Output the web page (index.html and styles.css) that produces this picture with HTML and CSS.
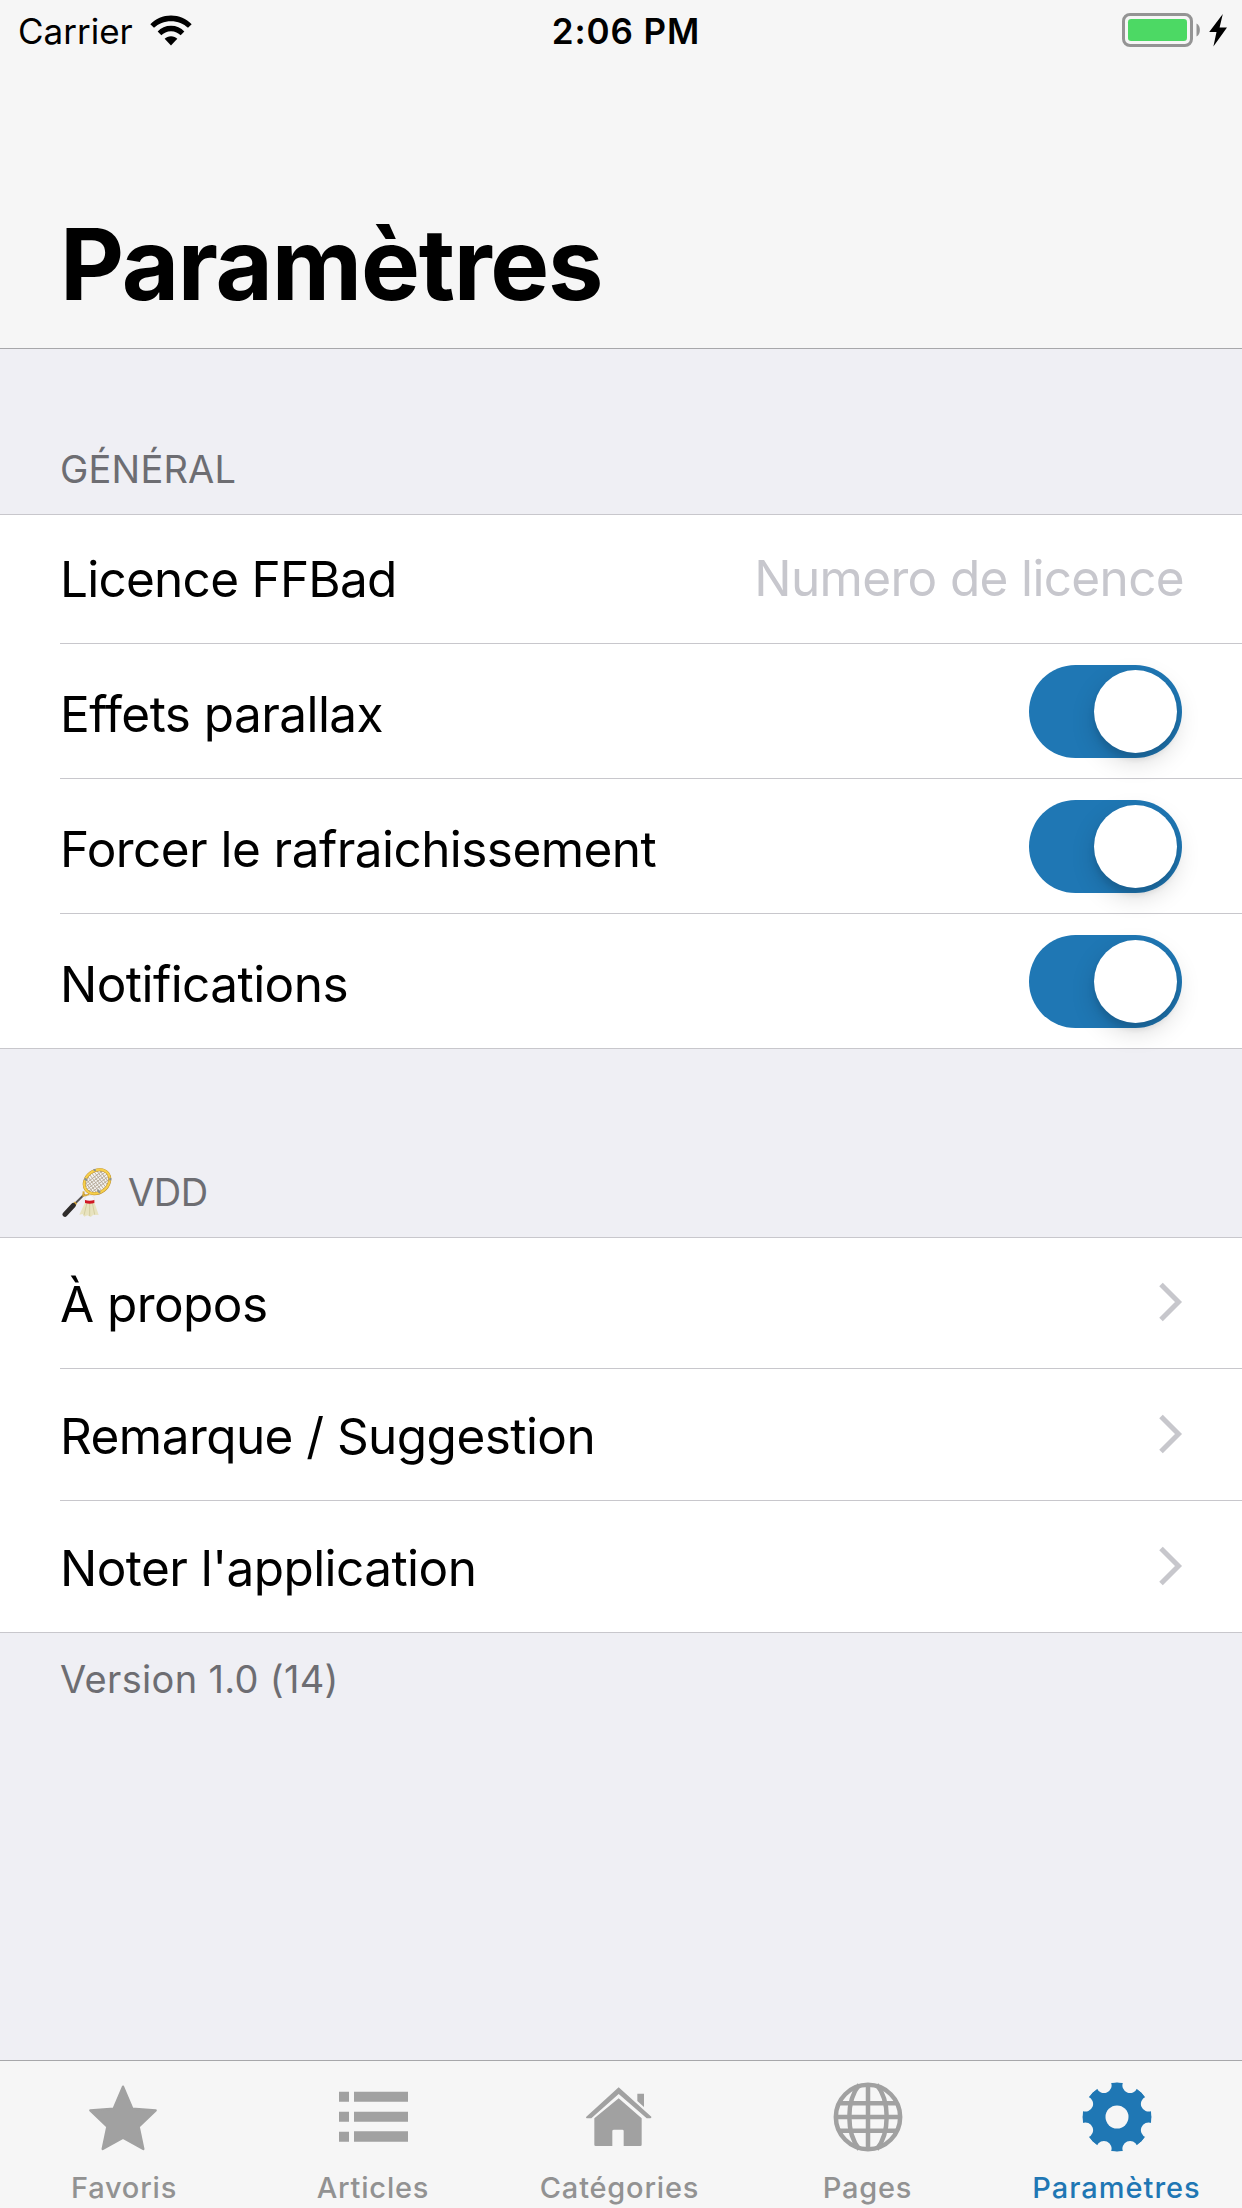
FILE: index.html
```html
<!DOCTYPE html>
<html lang="fr">
<head>
<meta charset="utf-8">
<title>Paramètres</title>
<link rel="stylesheet" href="styles.css">
</head>
<body>
<header class="navbar">
  <div class="status">
    <div class="status-left">
      <span>Carrier</span>
      <svg class="wifi" viewBox="0 0 126 92" width="42" height="31">
        <path d="M63 1C39 1 17 11 1 27L12 38C25 25 43 18 63 18S101 25 114 38L125 27C109 11 87 1 63 1Z"/>
        <path d="M63 32C47 32 33 38 23 49L34 60C41 53 51 48 63 48S85 53 92 60L103 49C93 38 79 32 63 32Z"/>
        <path d="M63 63C55 63 49 66 44 71L63 91L82 71C77 66 71 63 63 63Z"/>
      </svg>
    </div>
    <time class="status-time">2:06 PM</time>
    <div class="status-right">
      <svg width="106" height="34" viewBox="0 0 106 34">
        <rect x="1.500" y="1.500" width="68" height="31" rx="6.500" fill="none" stroke="#949494" stroke-width="3"/>
        <rect x="6" y="6" width="59" height="22" rx="3.200" fill="#4cd964"/>
        <path d="M74.500 10.500C79 12 79 22 74.500 23.500Z" fill="#949494"/>
        <path d="M100.800 1L87.200 19H94.500L91.400 33.500L105 14.500H97.600Z" fill="#000"/>
      </svg>
    </div>
  </div>
  <h1 class="title">Paramètres</h1>
</header>

<main class="content">
  <h2 class="section-title section-title-first">GÉNÉRAL</h2>
  <section class="group">
    <label class="row row-field"><span class="label">Licence FFBad</span><span class="placeholder">Numero de licence</span></label>
    <div class="row row-switch"><span class="label">Effets parallax</span><span class="switch"><span class="thumb"></span></span></div>
    <div class="row row-switch"><span class="label">Forcer le rafraichissement</span><span class="switch"><span class="thumb"></span></span></div>
    <div class="row row-switch"><span class="label">Notifications</span><span class="switch"><span class="thumb"></span></span></div>
  </section>

  <h2 class="section-title section-title-vdd">
    <svg class="racket" width="50" height="50" viewBox="0 0 150 150">
      <path d="M68 78L30 116" stroke="#555250" stroke-width="6"/>
      <path d="M42 104L34 112" stroke="#d9a83c" stroke-width="10"/>
      <path d="M34 112L9 139" stroke="#2f2c2b" stroke-width="15" stroke-linecap="round"/>
      <path d="M65 70L64 83L82 80" fill="none" stroke="#d9ab3a" stroke-width="6"/>
      <g transform="rotate(-37 105 41)">
        <ellipse cx="105" cy="41" rx="41" ry="33" fill="#f3f1ee"/>
        <path d="M76 18V64M84 13V69M92 10V72M100 8V74M108 8V74M116 9V73M124 12V70M132 17V65M68 25H142M65 33H145M64 41H146M65 49H145M68 57H142" stroke="#b3a796" stroke-width="2.500"/>
        <ellipse cx="105" cy="41" rx="41" ry="33" fill="none" stroke="#b88a2b" stroke-width="9"/>
        <ellipse cx="105" cy="41" rx="41" ry="33" fill="none" stroke="#f6cf4b" stroke-width="6.500"/>
      </g>
      <path d="M68 32L75 37M107 66L114 74M142 33L148 34M97 3L99 9" stroke="#8c918f" stroke-width="7"/>
      <path d="M71 100L52 140L62 138L67 146L76 142L86 147L94 140L110 141L96 100Z" fill="#e8e3bf"/>
      <path d="M75 104L66 142M83 104V144M91 104L98 140" stroke="#c8c18f" stroke-width="2"/>
      <path d="M69 101V94C69 78 97 78 97 94V101Z" fill="#f4f5fa" stroke="#cdcfd6" stroke-width="1"/>
      <path d="M69 96Q83 100 97 96V105Q83 109 69 105Z" fill="#d01824"/>
    </svg>
    <span>VDD</span>
  </h2>
  <section class="group">
    <a class="row row-link row-link-first"><span class="label">À propos</span><svg class="chevron" width="25" height="40" viewBox="0 0 25 40"><path d="M3 2.500L20.500 20L3 37.500"/></svg></a>
    <a class="row row-link"><span class="label">Remarque / Suggestion</span><svg class="chevron" width="25" height="40" viewBox="0 0 25 40"><path d="M3 2.500L20.500 20L3 37.500"/></svg></a>
    <a class="row row-link"><span class="label">Noter l'application</span><svg class="chevron" width="25" height="40" viewBox="0 0 25 40"><path d="M3 2.500L20.500 20L3 37.500"/></svg></a>
  </section>
  <p class="footnote">Version 1.0 (14)</p>
</main>

<nav class="tabbar">
  <a class="tab">
    <svg class="tab-icon tab-icon-star" width="70" height="70" viewBox="-105 -105 210 210"><path class="star" d="M0 -91L28 -25L98 -20L47 29L61 96L0 62L-61 96L-47 29L-98 -20L-28 -25Z"/></svg>
    <span>Favoris</span>
  </a>
  <a class="tab">
    <svg class="tab-icon" width="70" height="70" viewBox="-105 -105 210 210"><path d="M-102 -76h30v30h-30zM-57 -76h162v30h-162zM-102 -16h30v30h-30zM-57 -16h162v30h-162zM-102 44h30v30h-30zM-57 43h162v31h-162z"/></svg>
    <span>Articles</span>
  </a>
  <a class="tab">
    <svg class="tab-icon tab-icon-house" width="70" height="70" viewBox="-105 -105 210 210"><path d="M-1 -89L97 -1Q98 4 93 4H83L-1 -69L-83 4H-96Q-101 4 -98 -1ZM55 -70H75V-30L55 -48ZM-1 -56L68 4V83Q68 87 64 87H14V42Q14 38 10 38H-15Q-20 38 -20 42V87H-70Q-74 87 -74 83V4Z"/></svg>
    <span>Catégories</span>
  </a>
  <a class="tab">
    <svg class="tab-icon" width="70" height="70" viewBox="-105 -105 210 210"><g class="globe"><circle r="96.500"/><path d="M0 -98V98M-96 0H96M-88 -41H88M-88 41H88M-26 -97C-66 -49 -66 49 -26 97M26 -97C66 -49 66 49 26 97"/></g></svg>
    <span>Pages</span>
  </a>
  <a class="tab tab-active">
    <svg class="tab-icon" width="70" height="70" viewBox="-105 -105 210 210">
      <defs>
        <circle id="notch" cy="-102.500" r="23"/>
        <mask id="teeth" maskUnits="userSpaceOnUse" x="-105" y="-105" width="210" height="210">
          <circle r="104" fill="#fff"/>
          <g fill="#000">
            <circle r="34.500"/>
            <use href="#notch" transform="rotate(22.500)"/><use href="#notch" transform="rotate(67.500)"/>
            <use href="#notch" transform="rotate(112.500)"/><use href="#notch" transform="rotate(157.500)"/>
            <use href="#notch" transform="rotate(202.500)"/><use href="#notch" transform="rotate(247.500)"/>
            <use href="#notch" transform="rotate(292.500)"/><use href="#notch" transform="rotate(337.500)"/>
          </g>
        </mask>
      </defs>
      <circle r="104" mask="url(#teeth)"/>
    </svg>
    <span>Paramètres</span>
  </a>
</nav>
</body>
</html>
```
FILE: styles.css
```css
* { box-sizing: border-box; }

body {
  margin: 0;
  width: 1242px;
  height: 2208px;
  display: flex;
  flex-direction: column;
  overflow: hidden;
  background: #efeff4;
  color: #000;
  font-family: Inter, "Liberation Sans", sans-serif;
}

.navbar {
  height: 349px;
  display: flex;
  flex-direction: column;
  justify-content: space-between;
  background: #f6f6f6;
  border-bottom: 1px solid #a7a7aa;
}

.status {
  height: 62px;
  padding: 0 14px 0 18px;
  display: grid;
  grid-template-columns: 1fr auto 1fr;
  align-items: center;
  font-size: 35px;
  line-height: 62px;
}

.status-left { display: flex; align-items: center; gap: 17px; }
.wifi { margin-top: -2px; }
.status-time { padding-left: 6px; font-weight: 600; letter-spacing: 0.9px; }
.status-right { display: flex; justify-content: flex-end; margin-top: -2px; }

.title {
  margin: 0;
  padding: 0 0 24px 60px;
  font-size: 99px;
  line-height: 120px;
  font-weight: 700;
  letter-spacing: -1.25px;
}

.content { flex: 1; }

.section-title {
  margin: 0;
  padding-left: 60px;
  display: flex;
  align-items: flex-end;
  font-size: 38px;
  line-height: 46px;
  font-weight: 400;
  letter-spacing: 0.2px;
  color: #6d6d72;
}

.section-title-first { height: 165px; padding-bottom: 22px; }

.section-title-vdd {
  height: 188px;
  padding-left: 62px;
  padding-bottom: 22px;
  gap: 16px;
  letter-spacing: -0.5px;
}

.racket { margin-bottom: -3px; }

.group {
  background: #fff;
  border-top: 1px solid #c8c7cc;
  border-bottom: 1px solid #c8c7cc;
}

.row {
  margin-left: 60px;
  padding-right: 60px;
  display: flex;
  align-items: center;
  justify-content: space-between;
  font-size: 49.5px;
  line-height: 60px;
  letter-spacing: -0.56px;
}

.row + .row { border-top: 1px solid #c8c7cc; }

.row-field { height: 128px; }
.row-field .label { letter-spacing: -0.75px; }
.placeholder { color: #c7c7cd; margin: -2px -2px 0 0; letter-spacing: -0.65px; }

.row-switch { height: 135px; }
.row-switch .label { padding-top: 5px; }

.switch {
  width: 153px;
  height: 93px;
  padding: 5px;
  display: flex;
  justify-content: flex-end;
  border-radius: 46.5px;
  background: #1f77b4;
}

.thumb {
  width: 83px;
  height: 83px;
  border-radius: 50%;
  background: #fff;
  box-shadow: 0 9px 24px rgba(0, 0, 0, 0.15), 0 6px 6px rgba(0, 0, 0, 0.1);
}

.row-link { height: 132px; }
.row-link-first { height: 130px; }
.row-link .label { padding-top: 2px; }

.chevron {
  margin: -2px -1px 0 0;
  fill: none;
  stroke: #c7c7cc;
  stroke-width: 5px;
}

.footnote {
  margin: 0;
  padding: 23px 0 0 60px;
  font-size: 38px;
  line-height: 46px;
  letter-spacing: 0.31px;
  color: #6d6d72;
}

.tabbar {
  height: 148px;
  padding-top: 21px;
  display: grid;
  grid-template-columns: 248px 250px 243px 253px 245px;
  background: #f6f6f6;
  border-top: 1px solid #a7a7aa;
}

.tab {
  display: flex;
  flex-direction: column;
  align-items: center;
  gap: 18px;
  color: #929292;
  font-size: 29px;
  line-height: 36px;
  font-weight: 500;
  letter-spacing: 0.8px;
}

.tab-icon { display: block; fill: #a1a1a1; }
.tab-icon-star { margin-right: 3px; }
.tab-icon-house { margin-right: 2px; }
.tab-active { color: #1f77b4; letter-spacing: 1px; }
.tab-active .tab-icon { fill: #1f77b4; }

.star { stroke: #a1a1a1; stroke-width: 7px; stroke-linejoin: round; }
.globe { fill: none; stroke: #a1a1a1; stroke-width: 13.5px; }
```
